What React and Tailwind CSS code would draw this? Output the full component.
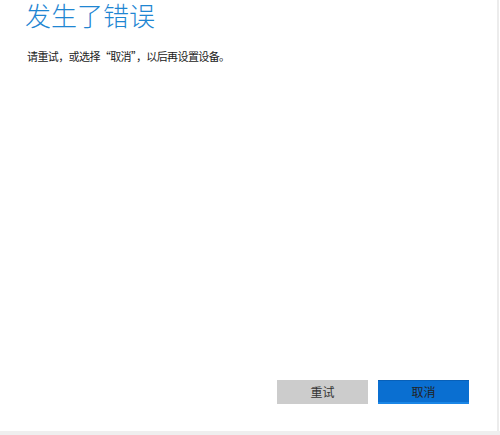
import React from "react";

const App = () => {
  return (
    <div
      className="w-[500px] h-[435px] bg-white flex flex-col overflow-hidden"
      style={{ fontFamily: '"Noto Sans CJK SC", "Noto Sans", sans-serif' }}
    >
      {/* Main panel */}
      <div className="flex-1 flex flex-col w-[499px] border-r-2 border-[#ececec]">
        <div className="pl-[27px]">
          <h1 className="-ml-[2px] text-[26px] leading-[30px] font-light text-[#1f86d2]">
            发生了错误
          </h1>
          <p className="mt-[18px] text-[11px] leading-[16px] tracking-[-0.6px] text-[#222222]">
            请重试，或选择“取消”，以后再设置设备。
          </p>
        </div>

        <div className="flex-1" />

        {/* Actions */}
        <div className="flex justify-end gap-[10px] pr-[28px] pb-[27px]">
          <button className="w-[91px] h-[24px] bg-[#cccccc] text-[12px] text-[#333333]">
            重试
          </button>
          <button className="w-[91px] h-[24px] bg-[#0a6fd1] border-t border-[#0860b8] border-b-2 border-b-[#1a86e6] text-[12px] text-[#222222]">
            取消
          </button>
        </div>
      </div>

      {/* Bottom strip */}
      <div className="h-[4px] bg-[#efefef]" />
    </div>
  );
};

export default App;
